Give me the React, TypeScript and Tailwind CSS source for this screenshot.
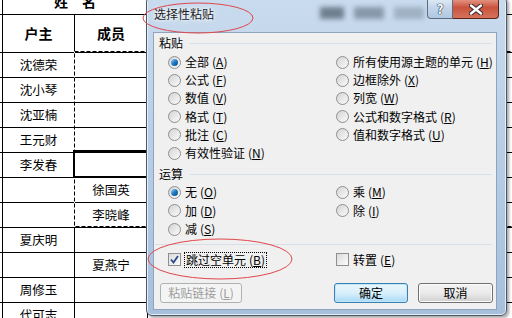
import type { ReactNode } from "react";

const rows: [string, string][] = [
  ["沈德荣", ""],
  ["沈小琴", ""],
  ["沈亚楠", ""],
  ["王元财", ""],
  ["李发春", ""],
  ["", "徐国英"],
  ["", "李晓峰"],
  ["夏庆明", ""],
  ["", "夏燕宁"],
  ["周修玉", ""],
  ["代可志", ""],
];

const cjk = "font-['SimSun','Noto_Sans_CJK_SC',sans-serif]";

function Key({ k }: { k: string }) {
  return (
    <span className="ml-[3px]">
      (<span className="underline underline-offset-1">{k}</span>)
    </span>
  );
}

function Radio({ checked, label, k }: { checked?: boolean; label: string; k: string }) {
  return (
    <div className="flex h-full items-center gap-[4px]">
      <div className="flex h-[13px] w-[13px] items-center justify-center rounded-full border border-[#8e8f8f] bg-gradient-to-br from-[#d4d4d4] to-[#fbfbfb]">
        {checked && (
          <div className="h-[7px] w-[7px] rounded-full bg-gradient-to-br from-[#9ad0f5] via-[#1f78c1] to-[#0b4d8a]" />
        )}
      </div>
      <span>
        {label}
        <Key k={k} />
      </span>
    </div>
  );
}

function Check({ checked }: { checked?: boolean }) {
  return (
    <div className="flex h-[13px] w-[13px] items-center justify-center border border-[#8e8f8f] bg-gradient-to-br from-[#dcdcdc] to-[#fbfbfb]">
      {checked && (
        <svg width="9" height="9" viewBox="0 0 9 9">
          <path d="M1 4.5 L3.5 7.5 L8 1" fill="none" stroke="#2c4a8a" strokeWidth="1.8" />
        </svg>
      )}
    </div>
  );
}

function Section({ title }: { title: string }) {
  return (
    <div className="flex h-[18px] items-center pl-[5px] pr-[4px]">
      <span>{title}</span>
      <div className="ml-[7px] flex-1 border-t border-[#d5dfe5]" />
    </div>
  );
}

function Btn({ children, w, kind }: { children: ReactNode; w: string; kind?: "focus" | "off" }) {
  const base = "flex h-[20px] items-center justify-center rounded-[3px] border " + w;
  if (kind === "off")
    return <div className={base + " border-[#adb2b5] bg-[#f4f4f4] text-[#9d9d9d]"}>{children}</div>;
  if (kind === "focus")
    return (
      <div className={base + " border-[#3c7fb1] bg-gradient-to-b from-[#eaf6fd] via-[#d9f0fc] to-[#a7d9f5] shadow-[inset_0_0_0_1px_#bfe6fb]"}>
        {children}
      </div>
    );
  return (
    <div className={base + " border-[#707070] bg-gradient-to-b from-[#f2f2f2] via-[#ebebeb] to-[#cfcfcf] shadow-[inset_0_0_0_1px_#fcfcfc]"}>
      {children}
    </div>
  );
}

export default function App() {
  return (
    <div className={"relative h-[318px] w-[512px] overflow-hidden bg-white text-black " + cjk}>
      {/* sheet */}
      <div className="flex flex-col">
        <div className="flex h-[15px] border-b border-black">
          <div className="ml-[2px] flex w-[145px] items-start justify-center border-l border-black">
            <span className="-mt-[6px] text-[14px] font-bold leading-[14px]">姓　名</span>
          </div>
        </div>
        <div className="flex h-[38px] border-b border-black">
          <div className="ml-[2px] flex w-[73px] items-center justify-center border-x border-black text-[14px] font-bold">户主</div>
          <div className="flex w-[72px] items-center justify-center text-[14px] font-bold">成员</div>
        </div>
        {rows.map(([a, b], i) => (
          <div key={i} className="flex h-[25px] border-b border-black text-[12.5px]">
            <div className="ml-[2px] flex w-[73px] items-center justify-center border-x border-black">{a}</div>
            <div className="flex w-[72px] items-center justify-center">{b}</div>
            <div className="flex-1 border-l border-black" />
          </div>
        ))}
      </div>

      {/* copy selection */}
      <svg className="absolute left-[73px] top-[50px]" width="439" height="180">
        <rect x="1.5" y="1.5" width="470" height="175" fill="none" stroke="white" />
        <rect x="1.5" y="1.5" width="470" height="175" fill="none" stroke="black" strokeDasharray="4 2" />
      </svg>
      <div className="absolute left-[73px] top-[150px] h-[28px] w-[80px] border-2 border-black" />

      {/* dialog */}
      <div className="absolute left-[146px] top-[-4px] flex h-[320px] w-[361px] flex-col rounded-[6px] border border-[#4b5868] bg-gradient-to-b from-[#c9dbee] via-[#b7cde6] to-[#a6c0dc] shadow-[inset_0_0_0_1px_#e6eef7,2px_2px_3px_rgba(0,0,0,0.35)]">
        <div className="flex h-[35px] items-start">
          <span className="pl-[7px] pt-[10px] text-[12px] leading-[14px] text-[#1b1b1b] [text-shadow:0_0_6px_#fff,0_0_3px_#fff]">
            选择性粘贴
          </span>
          <div className="ml-auto mr-[3px] mt-[10px] flex gap-[10px] blur-[2.5px]">
            <div className="h-[12px] w-[24px] bg-[#6f7f90]" />
            <div className="h-[12px] w-[30px] bg-[#8798aa]" />
            <div className="h-[12px] w-[30px] bg-[#9eb0c3]" />
          </div>
          <div className="mr-[7px] flex">
            <div className="flex h-[22px] w-[26px] items-center justify-center rounded-bl-[4px] border border-t-0 border-[#5b6c80] bg-gradient-to-b from-[#e7eff8] via-[#c3d5ea] to-[#b0c8e2] pt-[3px] text-[13px] font-bold text-white [text-shadow:0_0_1px_#203040,0_0_1px_#203040,0_0_1px_#203040]">
              ?
            </div>
            <div className="flex h-[22px] w-[46px] items-center justify-center rounded-br-[4px] border border-l-0 border-t-0 border-[#5a2219] bg-gradient-to-b from-[#e9a99a] via-[#c9523c] to-[#d6735c] pt-[3px]">
              <svg width="14" height="11" viewBox="0 0 14 11">
                <path d="M2 1.5 L12 9.5 M12 1.5 L2 9.5" stroke="#3b2a30" strokeWidth="4.5" strokeLinecap="round" />
                <path d="M2 1.5 L12 9.5 M12 1.5 L2 9.5" stroke="#ffffff" strokeWidth="2.4" strokeLinecap="round" />
              </svg>
            </div>
          </div>
        </div>

        <div className="mb-[5px] ml-[6px] mr-[9px] flex flex-1 flex-col border border-[#8ea3bd] bg-[#f0f0f0] pt-[1px] text-[12px] leading-[14px]">
          <Section title="粘贴" />
          <div className="mt-[1px] grid grid-cols-[168px_1fr] grid-rows-[repeat(6,18.2px)] grid-flow-col pl-[14px]">
            <Radio checked label="全部" k="A" />
            <Radio label="公式" k="F" />
            <Radio label="数值" k="V" />
            <Radio label="格式" k="T" />
            <Radio label="批注" k="C" />
            <Radio label="有效性验证" k="N" />
            <Radio label="所有使用源主题的单元" k="H" />
            <Radio label="边框除外" k="X" />
            <Radio label="列宽" k="W" />
            <Radio label="公式和数字格式" k="R" />
            <Radio label="值和数字格式" k="U" />
          </div>
          <div className="mt-[3px]">
            <Section title="运算" />
          </div>
          <div className="grid grid-cols-[168px_1fr] grid-rows-[repeat(3,18.5px)] grid-flow-col pl-[14px]">
            <Radio checked label="无" k="O" />
            <Radio label="加" k="D" />
            <Radio label="减" k="S" />
            <Radio label="乘" k="M" />
            <Radio label="除" k="I" />
          </div>
          <div className="ml-[1px] mr-[4px] mt-[5px] border-t border-[#d5dfe5]" />
          <div className="mt-[6px] grid h-[18px] grid-cols-[168px_1fr] pl-[14px]">
            <div className="flex items-center gap-[3px]">
              <Check checked />
              <span className="border border-dotted border-black px-[1px]">
                跳过空单元
                <Key k="B" />
              </span>
            </div>
            <div className="flex items-center gap-[4px]">
              <Check />
              <span>
                转置
                <Key k="E" />
              </span>
            </div>
          </div>
          <div className="mt-[14px] flex pl-[6px]">
            <Btn w="w-[82px]" kind="off">
              粘贴链接
              <Key k="L" />
            </Btn>
            <div className="ml-[92px]">
              <Btn w="w-[74px]" kind="focus">
                确定
              </Btn>
            </div>
            <div className="ml-[10px]">
              <Btn w="w-[75px]">取消</Btn>
            </div>
          </div>
        </div>
      </div>

      {/* annotations */}
      <svg className="pointer-events-none absolute left-0 top-0" width="512" height="318">
        <ellipse cx="198" cy="18" rx="55" ry="15" fill="none" stroke="#e0474c" strokeWidth="1" />
        <ellipse cx="220" cy="259" rx="72" ry="20" fill="none" stroke="#e0474c" strokeWidth="1" />
      </svg>
    </div>
  );
}
